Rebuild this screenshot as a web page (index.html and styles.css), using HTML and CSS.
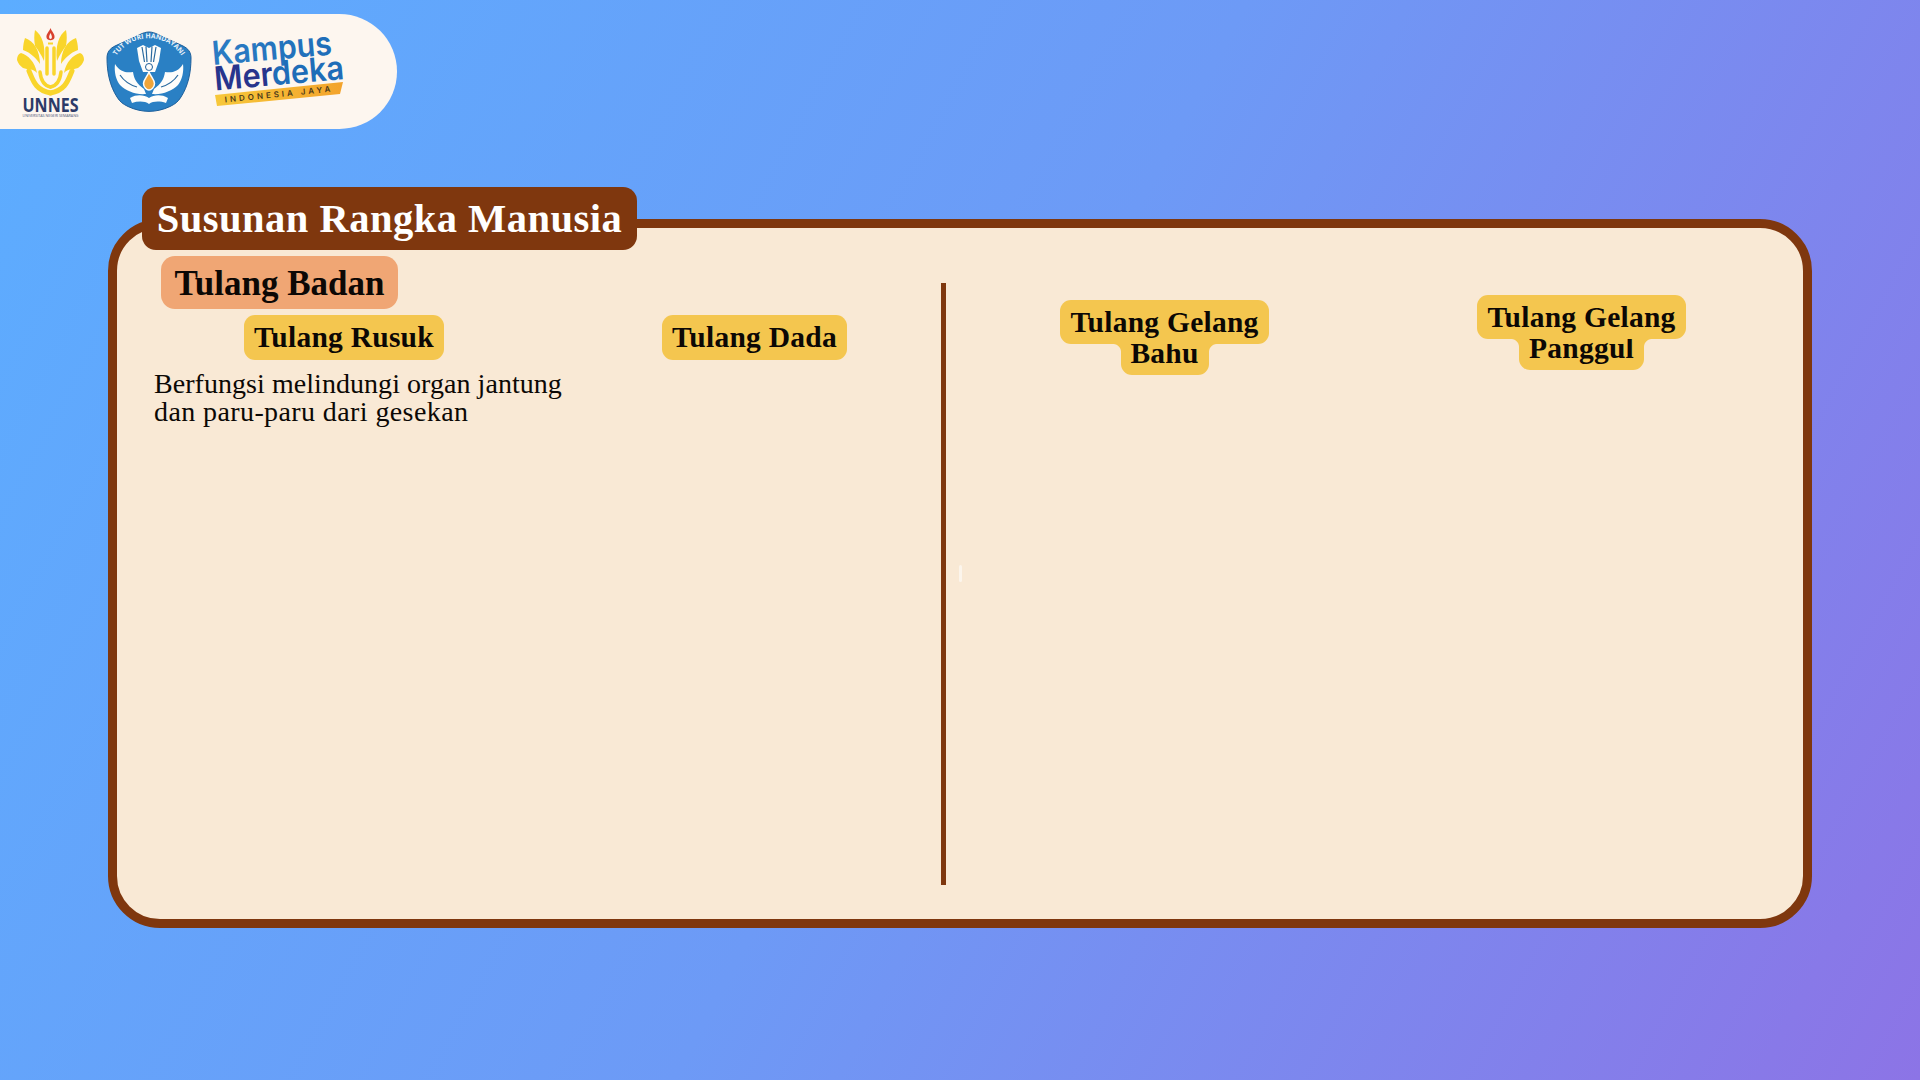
FILE: index.html
```html
<!DOCTYPE html>
<html lang="id">
<head>
<meta charset="utf-8">
<title>Susunan Rangka Manusia</title>
<link rel="stylesheet" href="styles.css">
</head>
<body>
<main class="page">
  <header class="logo-bar">
    <svg class="logo logo-unnes" viewBox="0 0 72 96" width="72" height="96" aria-label="UNNES">
      <path class="flame" d="M35.500 4 C37 8 40 10 39.500 13.500 C39 17 32 17 31.500 13.500 C31 10 34 8 35.500 4Z"/>
      <path class="flame-in" d="M35.500 9 C36.500 11 37.500 13 36.500 14.500 C36 15 35 15 34.500 14.500 C33.500 13 34.500 11 35.500 9Z"/>
      <rect class="gold" x="33" y="18.500" width="5" height="2"/>
      <g>
        <path class="gold" d="M20 6 C27 11 31 22 29 37 C26 30 23 26 20 22 C19 16 19 11 20 6Z"/>
        <path class="gold" d="M10 14 C19 17 25 27 25 40 C21 34 16 29 8 26 C8 21 9 17 10 14Z"/>
        <path class="gold" d="M2 36 C2 33 3 30 6 29 C13 31 20 38 22 49 C18 44 13 46 8 44 C5 42 3 39 2 36Z"/>
        <path class="gold-line thin" d="M14 47 C18 56 20 66 35.500 69"/>
        <path class="gold-line slim" d="M25 48 C26 57 30 62 35.500 63"/>
        <path class="gold-line slim" d="M32 24 L32 50"/>
      </g>
      <g transform="matrix(-1 0 0 1 71 0)">
        <path class="gold" d="M20 6 C27 11 31 22 29 37 C26 30 23 26 20 22 C19 16 19 11 20 6Z"/>
        <path class="gold" d="M10 14 C19 17 25 27 25 40 C21 34 16 29 8 26 C8 21 9 17 10 14Z"/>
        <path class="gold" d="M2 36 C2 33 3 30 6 29 C13 31 20 38 22 49 C18 44 13 46 8 44 C5 42 3 39 2 36Z"/>
        <path class="gold-line thin" d="M14 47 C18 56 20 66 35.500 69"/>
        <path class="gold-line slim" d="M25 48 C26 57 30 62 35.500 63"/>
        <path class="gold-line slim" d="M32 24 L32 50"/>
      </g>
      <text class="unnes-name" x="35.500" y="87.500" textLength="56" lengthAdjust="spacingAndGlyphs">UNNES</text>
      <text class="unnes-sub" x="35.500" y="92.500" textLength="56" lengthAdjust="spacingAndGlyphs">UNIVERSITAS NEGERI SEMARANG</text>
    </svg>
    <svg class="logo logo-tut" viewBox="0 0 86 84" width="86" height="84" aria-label="Tut Wuri Handayani">
      <path class="shield" d="M43 1 C46 1 49 2 52 3.500 L77 15 C82 17.500 85 21 85 27 C85 42 82 55 75 66 C72 71 69 73 64 75.500 C50 82 36 82 22 75.500 C17 73 14 71 11 66 C4 55 1 42 1 27 C1 21 4 17.500 9 15 L34 3.500 C37 2 40 1 43 1Z"/>
      <defs><path id="tut-arc" d="M8 29 A39 39 0 0 1 78 29"/></defs>
      <text class="tut-text"><textPath href="#tut-arc" startOffset="50%">TUT WURI HANDAYANI</textPath></text>
      <path class="w-fill" d="M31 17 L37 14 L43 17 L49 14 L55 17 L53 30 L49 41 L37 41 L33 30Z"/>
      <path class="tut-cut" d="M36 16 L38.500 31 M40 15.500 L41 31 M46 15.500 L45 31 M50 16 L47.500 31"/>
      <circle class="w-fill dark-edge" cx="43" cy="36" r="3.500"/>
      <path class="w-fill" d="M9 33 C14 41 20 42 27 41 C28 48 31 53 38 58 L40 63 C30 64 20 60 14 54 C10 49 8 41 9 33Z"/>
      <path class="w-fill" d="M77 33 C72 41 66 42 59 41 C58 48 55 53 48 58 L46 63 C56 64 66 60 72 54 C76 49 78 41 77 33Z"/>
      <path class="tut-cut" d="M14 44 C18 50 24 54 31 56 M72 44 C68 50 62 54 55 56"/>
      <path class="drop" d="M43 41 C45 46 48.500 49 48.500 52.500 C48.500 56.500 45 59 43 59 C41 59 37.500 56.500 37.500 52.500 C37.500 49 41 46 43 41Z"/>
      <path class="w-fill" d="M24 67 C31 63 38 64 43 67 C48 64 55 63 62 67 L60 72 C54 70 47 70 43 73 C39 70 32 70 26 72Z"/>
    </svg>
    <svg class="logo logo-km" viewBox="0 0 138 76" width="138" height="76" aria-label="Kampus Merdeka Indonesia Jaya">
      <defs>
        <linearGradient id="km-top" x1="0" y1="0" x2="1" y2="0"><stop offset="0" stop-color="#2b7cc4"/><stop offset="1" stop-color="#1f6db8"/></linearGradient>
        <linearGradient id="ribbon" x1="0" y1="0" x2="1" y2="0"><stop offset="0" stop-color="#f7c83a"/><stop offset="1" stop-color="#f3a32c"/></linearGradient>
      </defs>
      <g transform="rotate(-5 69 38)">
        <text class="km km-top" x="1" y="24" textLength="120" lengthAdjust="spacingAndGlyphs">Kampus</text>
        <text class="km km-bottom" x="1" y="49.500" textLength="130" lengthAdjust="spacingAndGlyphs">Mer<tspan class="km-blue">deka</tspan></text>
      </g>
      <path class="km-ribbon" d="M2 60 L130 47 L127 59 L4 71Z"/>
      <text class="km-sub" x="66" y="62" transform="rotate(-5.800 66 59)">INDONESIA JAYA</text>
    </svg>
  </header>

  <section class="card">
    <h1 class="title">Susunan Rangka Manusia</h1>
    <div class="col-left">
      <h2 class="heading">Tulang Badan</h2>
      <div class="branches">
        <article class="branch">
          <h3 class="pill">Tulang Rusuk</h3>
          <p class="desc">Berfungsi melindungi organ jantung<br><span class="desc-second">dan paru-paru dari gesekan</span></p>
        </article>
        <article class="branch">
          <h3 class="pill">Tulang Dada</h3>
        </article>
      </div>
    </div>
    <div class="divider"></div>
    <span class="cursor-mark"></span>
    <div class="col-right">
      <h3 class="stack stack-low"><span class="line">Tulang Gelang</span><span class="line line-two line-bahu">Bahu</span></h3>
      <h3 class="stack"><span class="line">Tulang Gelang</span><span class="line line-two line-panggul">Panggul</span></h3>
    </div>
  </section>
</main>
</body>
</html>
```
FILE: styles.css
```css
* { box-sizing: border-box; }
html, body { margin: 0; padding: 0; }
body { font-family: "Liberation Serif", "DejaVu Serif", serif; color: #0c0805; }

.page {
  width: 1920px;
  height: 1080px;
  overflow: hidden;
  padding-top: 14px;
  background: linear-gradient(118deg, #5cadff 0%, #6d9af6 50%, #8c74e6 100%);
}

.logo-bar {
  width: 397px;
  height: 115px;
  display: flex;
  align-items: flex-start;
  background: #fdf6ef;
  border-radius: 0 58px 58px 0;
}
.logo { display: block; flex: none; }
.logo-unnes { margin: 10px 0 0 15px; }
.logo-tut { margin: 17px 0 0 19px; }
.logo-km { margin: 21px 0 0 21px; }

.flame { fill: #d8412f; }
.flame-in { fill: #fdf6ef; }
.gold { fill: #f9d52b; }
.gold-line { fill: none; stroke: #f9d52b; stroke-linecap: round; }
.gold-line.thin { stroke-width: 5; }
.gold-line.slim { stroke-width: 3.500; }
.unnes-name { font: 700 20px "Open Sans", sans-serif; fill: #2c3a68; text-anchor: middle; }
.unnes-sub { font: 400 3px "Open Sans", sans-serif; fill: #4a5478; text-anchor: middle; }

.shield { fill: #2a80c4; stroke: #1d5f9b; stroke-width: 1; }
.tut-text { font: 700 6.800px "Open Sans", sans-serif; fill: #eaf3fa; text-anchor: middle; }
.w-fill { fill: #fdfdfb; }
.dark-edge { stroke: #1d5f9b; stroke-width: 1; }
.tut-cut { fill: none; stroke: #2a6a9f; stroke-width: 1.200; }
.drop { fill: #f0a53a; stroke: #fdfdfb; stroke-width: 1.500; }

.km { font-family: "Inter", "Lato", sans-serif; font-weight: 600; font-size: 33px; }
.km-top { fill: url(#km-top); }
.km-bottom { fill: #27358d; }
.km-blue { fill: #1f6db8; }
.km-ribbon { fill: url(#ribbon); }
.km-sub { font: 600 8px "Inter", sans-serif; letter-spacing: 3px; fill: #4b3a1a; text-anchor: middle; }

.card {
  position: relative;
  display: flex;
  width: 1704px;
  height: 709px;
  margin: 90px 0 0 108px;
  background: #f9e9d5;
  border: 9px solid #7f370e;
  border-radius: 52px;
}

.title {
  position: absolute;
  top: -41px;
  left: 25px;
  margin: 0;
  width: 495px;
  height: 63px;
  line-height: 63px;
  white-space: nowrap;
  text-align: center;
  font-size: 40.500px;
  font-weight: 700;
  letter-spacing: 0.500px;
  color: #fff;
  background: #7f370e;
  border-radius: 14px;
}

.col-left {
  flex: none;
  width: 824px;
  padding: 28px 0 0 37px;
}
.heading {
  width: 237px;
  height: 53px;
  margin: 0 0 0 7px;
  line-height: 55px;
  text-align: center;
  font-size: 35px;
  font-weight: 700;
  white-space: nowrap;
  background: #f0a674;
  border-radius: 14px;
}
.branches {
  display: grid;
  grid-template-columns: 380px 373px;
  column-gap: 34px;
  margin-top: 6px;
}
.branch { display: flex; flex-direction: column; align-items: center; }
.pill, .line {
  margin: 0;
  white-space: nowrap;
  font-size: 29.500px;
  font-weight: 700;
  letter-spacing: 0.250px;
  text-align: center;
  background: #f4c64f;
  border-radius: 11px;
}
.pill {
  height: 45px;
  line-height: 45px;
  padding: 0 10px;
}
.desc {
  align-self: flex-start;
  margin: 10px 0 0;
  font-size: 28px;
  line-height: 28px;
  white-space: nowrap;
  letter-spacing: 0.050px;
}
.desc-second { letter-spacing: 0.400px; }

.divider {
  flex: none;
  width: 5px;
  height: 602px;
  margin-top: 55px;
  background: #7f370e;
}
.cursor-mark {
  position: absolute;
  left: 842px;
  top: 337px;
  width: 3px;
  height: 17px;
  border-radius: 2px;
  background: rgba(255, 255, 255, 0.55);
}

.col-right {
  flex: 1;
  display: grid;
  grid-template-columns: 417px 417px;
  align-items: start;
  padding: 67px 0 0 10px;
}
.stack {
  display: flex;
  flex-direction: column;
  align-items: center;
  margin: 0;
  font-weight: 700;
}
.stack-low { margin-top: 5px; }
.line {
  display: block;
  position: relative;
  z-index: 1;
  height: 44px;
  line-height: 44px;
  padding: 0 10px;
}
.line-two {
  z-index: 0;
  height: 44px;
  margin-top: -13px;
  padding: 0;
  line-height: 44px;
}
.line-two::before,
.line-two::after {
  content: "";
  position: absolute;
  top: 13px;
  width: 8px;
  height: 8px;
}
.line-two::before {
  left: -8px;
  background: radial-gradient(circle at 0 100%, transparent 7.500px, #f4c64f 8.500px);
}
.line-two::after {
  right: -8px;
  background: radial-gradient(circle at 100% 100%, transparent 7.500px, #f4c64f 8.500px);
}
.line-bahu { width: 88px; }
.line-panggul { width: 125px; }
```
